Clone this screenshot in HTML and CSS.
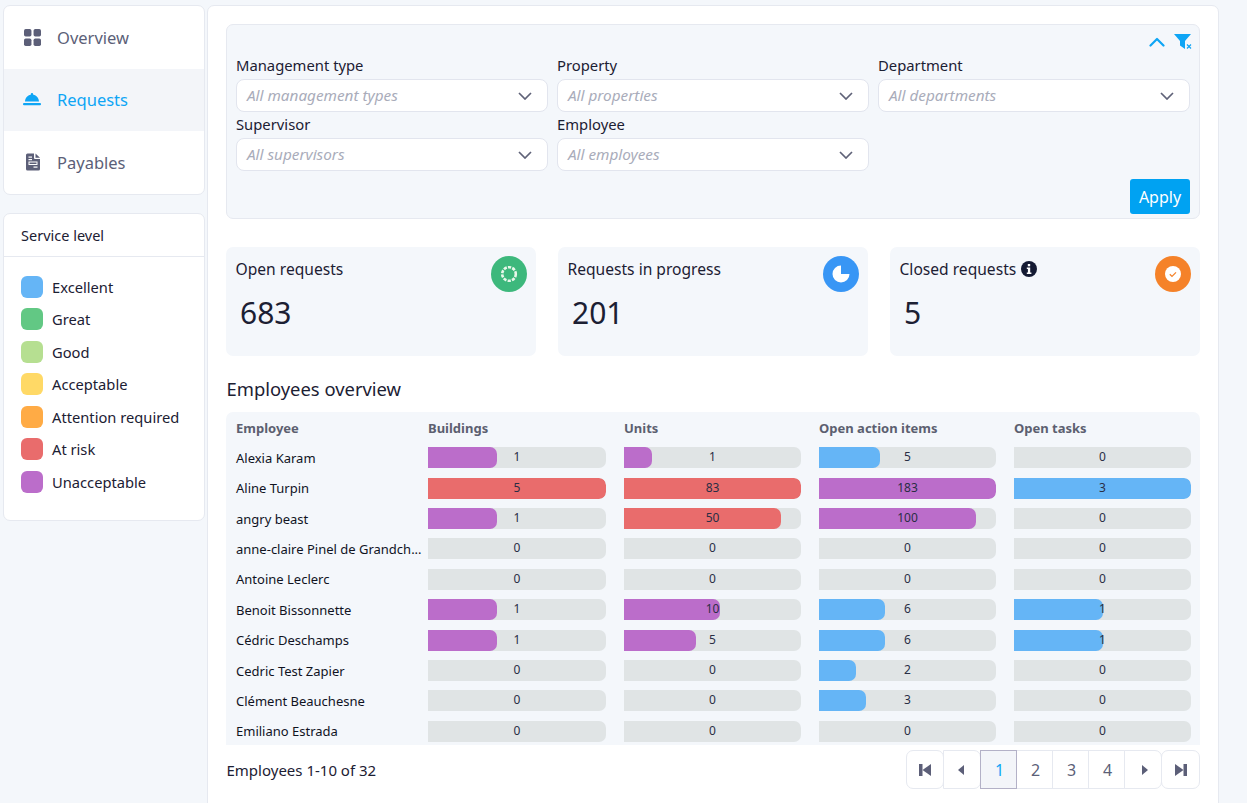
FILE: index.html
```html
<!DOCTYPE html>
<html lang="en">
<head>
<meta charset="utf-8">
<title>Requests</title>
<link rel="stylesheet" href="styles.css">
</head>
<body>
<div class="app">
  <aside class="side">
    <nav class="card nav">
      <a class="nav-item"><svg class="nav-icon" viewBox="0 0 16 16" fill="#5c5f78"><rect x="0" y="0" width="7" height="7" rx="1.6"/><rect x="9" y="0" width="7" height="7" rx="1.6"/><rect x="0" y="9" width="7" height="7" rx="1.6"/><rect x="9" y="9" width="7" height="7" rx="1.6"/></svg><span>Overview</span></a>
      <a class="nav-item active"><svg class="nav-icon bell" viewBox="0 0 18 14" fill="#0ea5f5"><path d="M7.800 2.200V1.600a1.200 1.200 0 0 1 2.400 0v.6c3.400.5 5.600 3.300 5.800 6.800H2c.2-3.500 2.400-6.300 5.800-6.800z"/><rect x="0" y="10.500" width="18" height="2.300" rx="1"/></svg><span>Requests</span></a>
      <a class="nav-item"><svg class="nav-icon doc" viewBox="0 0 14 17" fill="#5c5f78"><path d="M1.500 0H8v4.500a1 1 0 0 0 1 1h5V15.500A1.500 1.500 0 0 1 12.500 17h-11A1.500 1.500 0 0 1 0 15.500v-14A1.500 1.500 0 0 1 1.500 0zM9.500 0 14 4.200H9.500z"/><rect x="2.500" y="3" width="3.500" height="1.200" fill="#fff"/><rect x="2.500" y="5.500" width="3.500" height="1.200" fill="#fff"/><rect x="2.500" y="8" width="9" height="3.500" fill="#fff"/><rect x="3.500" y="9" width="7" height="1.500" fill="#5c5f78"/><rect x="7.500" y="13" width="4" height="1.200" fill="#fff"/></svg><span>Payables</span></a>
    </nav>
    <section class="card legend">
      <h2 class="legend-title">Service level</h2>
      <ul class="legend-list">
        <li><i class="swatch blue"></i>Excellent</li>
        <li><i class="swatch green"></i>Great</li>
        <li><i class="swatch lime"></i>Good</li>
        <li><i class="swatch yellow"></i>Acceptable</li>
        <li><i class="swatch orange"></i>Attention required</li>
        <li><i class="swatch red"></i>At risk</li>
        <li><i class="swatch purple"></i>Unacceptable</li>
      </ul>
    </section>
  </aside>
  <main class="card main">
    <section class="filters">
      <div class="filter-tools">
        <svg class="chev-up" viewBox="0 0 16 10" fill="none" stroke="#0ea5f5" stroke-width="2.200" stroke-linecap="round" stroke-linejoin="round"><path d="M1.500 8.500 8 2l6.500 6.500"/></svg>
        <svg class="funnel" viewBox="0 0 18 15" fill="#0ea5f5"><path d="M0 0h17L11 7v8L6 11.500V7z"/><path d="M13 10.500l4 4m0-4l-4 4" stroke="#0ea5f5" stroke-width="1.200" fill="none"/></svg>
      </div>
      <div class="filter-grid">
        <div class="field"><label>Management type</label><div class="select"><em>All management types</em><svg viewBox="0 0 14 8"><path d="M1 1l6 6 6-6"/></svg></div></div>
        <div class="field"><label>Property</label><div class="select"><em>All properties</em><svg viewBox="0 0 14 8"><path d="M1 1l6 6 6-6"/></svg></div></div>
        <div class="field"><label>Department</label><div class="select"><em>All departments</em><svg viewBox="0 0 14 8"><path d="M1 1l6 6 6-6"/></svg></div></div>
        <div class="field"><label>Supervisor</label><div class="select"><em>All supervisors</em><svg viewBox="0 0 14 8"><path d="M1 1l6 6 6-6"/></svg></div></div>
        <div class="field"><label>Employee</label><div class="select"><em>All employees</em><svg viewBox="0 0 14 8"><path d="M1 1l6 6 6-6"/></svg></div></div>
      </div>
      <div class="filter-actions"><button class="apply">Apply</button></div>
    </section>

    <section class="kpis">
      <div class="kpi">
        <div class="kpi-label">Open requests</div>
        <div class="kpi-value">683</div>
        <span class="kpi-icon k-green"><svg viewBox="0 0 18 18" fill="none" stroke="#e9f7ea" stroke-width="2.600" stroke-dasharray="3.200 1.200"><circle cx="9" cy="9" r="6.800"/></svg></span>
      </div>
      <div class="kpi">
        <div class="kpi-label">Requests in progress</div>
        <div class="kpi-value">201</div>
        <span class="kpi-icon k-blue"><svg viewBox="0 0 18 18" fill="#fff"><path d="M9 0.500V9h8.500A8.500 8.500 0 1 1 9 0.500z"/></svg></span>
      </div>
      <div class="kpi">
        <div class="kpi-label">Closed requests <svg class="info" viewBox="0 0 16 16"><circle cx="8" cy="8" r="8" fill="#141a33"/><rect x="6.800" y="3" width="2.400" height="2.300" fill="#fff"/><path d="M5.800 6.500h3.400v5h1.200v1.500H5.800v-1.500h1.100V8H5.800z" fill="#fff"/></svg></div>
        <div class="kpi-value">5</div>
        <span class="kpi-icon k-orange"><svg viewBox="0 0 16 16"><circle cx="8" cy="8" r="8" fill="#fff"/><path d="M4.800 8.200l2.200 2.200 4-4" fill="none" stroke="#f58229" stroke-width="1.300"/></svg></span>
      </div>
    </section>

    <h2 class="section-title">Employees overview</h2>

    <section class="table">
      <div class="row head"><div>Employee</div><div>Buildings</div><div>Units</div><div>Open action items</div><div>Open tasks</div></div>
      <div class="row">
        <div class="name">Alexia Karam</div>
        <div class="bar"><i class="fill purple" style="width:39%"></i><b>1</b></div>
        <div class="bar"><i class="fill purple" style="width:16%"></i><b>1</b></div>
        <div class="bar"><i class="fill blue" style="width:34.500%"></i><b>5</b></div>
        <div class="bar"><b>0</b></div>
      </div>
      <div class="row">
        <div class="name">Aline Turpin</div>
        <div class="bar"><i class="fill red" style="width:100%"></i><b>5</b></div>
        <div class="bar"><i class="fill red" style="width:100%"></i><b>83</b></div>
        <div class="bar"><i class="fill purple" style="width:100%"></i><b>183</b></div>
        <div class="bar"><i class="fill blue" style="width:100%"></i><b>3</b></div>
      </div>
      <div class="row">
        <div class="name">angry beast</div>
        <div class="bar"><i class="fill purple" style="width:39%"></i><b>1</b></div>
        <div class="bar"><i class="fill red" style="width:88.500%"></i><b>50</b></div>
        <div class="bar"><i class="fill purple" style="width:88.500%"></i><b>100</b></div>
        <div class="bar"><b>0</b></div>
      </div>
      <div class="row">
        <div class="name">anne-claire Pinel de Grandch...</div>
        <div class="bar"><b>0</b></div>
        <div class="bar"><b>0</b></div>
        <div class="bar"><b>0</b></div>
        <div class="bar"><b>0</b></div>
      </div>
      <div class="row">
        <div class="name">Antoine Leclerc</div>
        <div class="bar"><b>0</b></div>
        <div class="bar"><b>0</b></div>
        <div class="bar"><b>0</b></div>
        <div class="bar"><b>0</b></div>
      </div>
      <div class="row">
        <div class="name">Benoit Bissonnette</div>
        <div class="bar"><i class="fill purple" style="width:39%"></i><b>1</b></div>
        <div class="bar"><i class="fill purple" style="width:54%"></i><b>10</b></div>
        <div class="bar"><i class="fill blue" style="width:37.500%"></i><b>6</b></div>
        <div class="bar"><i class="fill blue" style="width:50%"></i><b>1</b></div>
      </div>
      <div class="row">
        <div class="name">Cédric Deschamps</div>
        <div class="bar"><i class="fill purple" style="width:39%"></i><b>1</b></div>
        <div class="bar"><i class="fill purple" style="width:40.500%"></i><b>5</b></div>
        <div class="bar"><i class="fill blue" style="width:37.500%"></i><b>6</b></div>
        <div class="bar"><i class="fill blue" style="width:50%"></i><b>1</b></div>
      </div>
      <div class="row">
        <div class="name">Cedric Test Zapier</div>
        <div class="bar"><b>0</b></div>
        <div class="bar"><b>0</b></div>
        <div class="bar"><i class="fill blue" style="width:21%"></i><b>2</b></div>
        <div class="bar"><b>0</b></div>
      </div>
      <div class="row">
        <div class="name">Clément Beauchesne</div>
        <div class="bar"><b>0</b></div>
        <div class="bar"><b>0</b></div>
        <div class="bar"><i class="fill blue" style="width:26.500%"></i><b>3</b></div>
        <div class="bar"><b>0</b></div>
      </div>
      <div class="row">
        <div class="name">Emiliano Estrada</div>
        <div class="bar"><b>0</b></div>
        <div class="bar"><b>0</b></div>
        <div class="bar"><b>0</b></div>
        <div class="bar"><b>0</b></div>
      </div>
    </section>

    <footer class="table-foot">
      <div class="count">Employees 1-10 of 32</div>
      <div class="pager">
        <a class="pg first"><svg viewBox="0 0 12 12"><rect x="0" y="0" width="3.500" height="12"/><path d="M12 0v12L3.500 6z"/></svg></a>
        <a class="pg step"><svg viewBox="0 0 12 12"><path d="M8 1v10L2 6z"/></svg></a>
        <a class="pg num current">1</a>
        <a class="pg num">2</a>
        <a class="pg num">3</a>
        <a class="pg num">4</a>
        <a class="pg step"><svg viewBox="0 0 12 12"><path d="M5 1v10l6-5z"/></svg></a>
        <a class="pg last"><svg viewBox="0 0 12 12"><rect x="8.500" y="0" width="3.500" height="12"/><path d="M0 0v12l8.500-6z"/></svg></a>
      </div>
    </footer>
  </main>
</div>
</body>
</html>
```

FILE: styles.css
```css
* { box-sizing: border-box; }
html, body { height: 100%; }
body {
  margin: 0;
  background: #f4f7fb;
  color: #1c2033;
  font-family: "Noto Sans", "Open Sans", sans-serif;
  font-size: 14px;
  overflow: hidden;
}
.app {
  display: flex;
  align-items: flex-start;
  gap: 2px;
  padding: 5px 0 0 3px;
  height: 803px;
}
.card {
  background: #fff;
  border: 1px solid #e6e9f0;
  border-radius: 7px;
}
.side {
  width: 202px;
  flex: none;
  display: flex;
  flex-direction: column;
  gap: 18px;
}
.nav { padding: 0; overflow: hidden; height: 190px; }
.nav-item {
  height: 62.500px;
  display: flex;
  align-items: center;
  gap: 16px;
  padding-left: 20px;
  color: #5c5f78;
  font-size: 16.500px;
}
.nav-icon { width: 17px; height: 17px; flex: none; }
.bell { width: 18px; height: 15px; margin-left: -1px; }
.doc { width: 14px; height: 18px; margin: 0 1.500px; }
.nav-item.active { background: #f3f5f9; color: #0ea5f5; }
.legend { height: 308px; }
.legend-title {
  margin: 0;
  padding: 0 0 0 17px;
  height: 43px;
  line-height: 43px;
  font-weight: 400;
  font-size: 14.500px;
  border-bottom: 1px solid #e6e9f0;
}
.legend-list {
  list-style: none;
  margin: 0;
  padding: 18.600px 0 0 17px;
  display: flex;
  flex-direction: column;
  gap: 10px;
}
.legend-list li {
  display: flex;
  align-items: center;
  gap: 9px;
  height: 22.500px;
  font-size: 14.700px;
}
.swatch { width: 22px; height: 22px; border-radius: 6px; flex: none; }
.blue { background: #65b5f6; }
.green { background: #62c884; }
.lime { background: #b6df91; }
.yellow { background: #ffd966; }
.orange { background: #ffab45; }
.red { background: #e96c6c; }
.purple { background: #bb6dca; }

.main {
  width: 1012px;
  height: 815px;
  flex: none;
  padding: 18px 18px 0 18px;
}
.filters {
  position: relative;
  height: 195px;
  background: #f4f7fb;
  border: 1px solid #e6e9f0;
  border-radius: 7px;
  padding: 29px 9px 0 9px;
}
.filter-tools {
  position: absolute;
  top: 9px;
  right: 7px;
  display: flex;
  align-items: center;
  gap: 9px;
}
.chev-up { width: 16px; height: 10px; }
.funnel { width: 18px; height: 15px; }
.filter-grid {
  display: grid;
  grid-template-columns: repeat(3, 312px);
  column-gap: 9px;
  row-gap: 0;
}
.field label {
  display: block;
  height: 25px;
  line-height: 22px;
  font-size: 14.800px;
}
.select {
  height: 33px;
  background: #fff;
  border: 1px solid #e2e5ee;
  border-radius: 8px;
  display: flex;
  align-items: center;
  justify-content: space-between;
  padding: 0 15px 0 10px;
  margin-bottom: 1px;
}
.select em { color: #a9acba; font-size: 15.300px; font-style: italic; margin-top: -2px; }
.select svg { width: 14px; height: 8px; fill: none; stroke: #5f6278; stroke-width: 1.700; }
.filter-actions {
  display: flex;
  justify-content: flex-end;
  margin-top: 7px;
}
.apply {
  width: 60px;
  height: 35px;
  border: 0;
  border-radius: 3px;
  background: #00a2f2;
  color: #fff;
  font: 400 16px "Noto Sans", sans-serif;
  padding: 0;
}
.kpis {
  display: flex;
  justify-content: space-between;
  margin-top: 28px;
}
.kpi {
  position: relative;
  width: 310px;
  height: 109px;
  background: #f4f7fb;
  border-radius: 7px;
  padding: 9px 9.500px;
}
.kpi-label {
  font-size: 15.600px;
  line-height: 26px;
  display: flex;
  align-items: center;
  gap: 5px;
}
.info { width: 16px; height: 16px; }
.kpi-value {
  font-size: 30px;
  line-height: 42px;
  margin-top: 10px;
  padding-left: 4.500px;
}
.kpi-icon {
  position: absolute;
  top: 9px;
  right: 9px;
  width: 36px;
  height: 36px;
  border-radius: 50%;
  display: flex;
  align-items: center;
  justify-content: center;
}
.kpi-icon svg { width: 18px; height: 18px; }
.k-green { background: #3db87c; }
.k-blue { background: #3896f5; }
.k-orange { background: #f58229; }
.k-orange svg { width: 16px; height: 16px; }
.section-title {
  margin: 20px 0 0;
  padding-left: 0.500px;
  font-weight: 400;
  font-size: 18.400px;
  line-height: 26px;
  height: 28px;
}
.table {
  margin-top: 8px;
  height: 333px;
  background: #f4f7fb;
  border-radius: 7px 7px 0 0;
  padding-top: 5px;
  overflow: hidden;
}
.row {
  display: grid;
  grid-template-columns: 192px 196px 195px 195px 177px;
  align-items: center;
  padding-left: 10px;
  height: 30.400px;
  font-size: 13px;
}
.head {
  height: 21px;
  font-weight: 700;
  color: #5c5f70;
  margin-bottom: 4.600px;
}
.head div { white-space: nowrap; }
.name {
  white-space: nowrap;
  color: #10131f;
}
.bar {
  position: relative;
  width: 177px;
  height: 21px;
  background: #e0e4e5;
  border-radius: 0 7px 7px 0;
  overflow: hidden;
  text-align: center;
  font-size: 12px;
  line-height: 20px;
}
.row .bar:nth-child(2) { width: 178px; }
.bar b { position: relative; font-weight: 400; color: #2a2e45; }
.fill {
  position: absolute;
  left: 0;
  top: 0;
  bottom: 0;
  border-radius: 0 7px 7px 0;
}
.table-foot {
  display: flex;
  align-items: center;
  justify-content: space-between;
  margin-top: 5px;
  padding-left: 0.500px;
  height: 39px;
}
.count { font-size: 15px; }
.pager { display: flex; height: 39px; }
.pg {
  display: flex;
  align-items: center;
  justify-content: center;
  height: 39px;
  width: 37px;
  background: #fff;
  border: 1px solid #e6e9f0;
  margin-left: -1px;
  color: #5c5f78;
  font-size: 16px;
}
.num { padding-left: 2px; }
.pg svg { width: 12px; height: 12px; fill: #5c5f78; }
.first { width: 38px; border-radius: 7px; }
.last { width: 39px; border-radius: 7px; }
.step { width: 38px; border-radius: 0 7px 7px 0; }
.current {
  background: #f3f5f9;
  border-color: #b3b1c7;
  color: #0ea5f5;
  position: relative;
}
```
